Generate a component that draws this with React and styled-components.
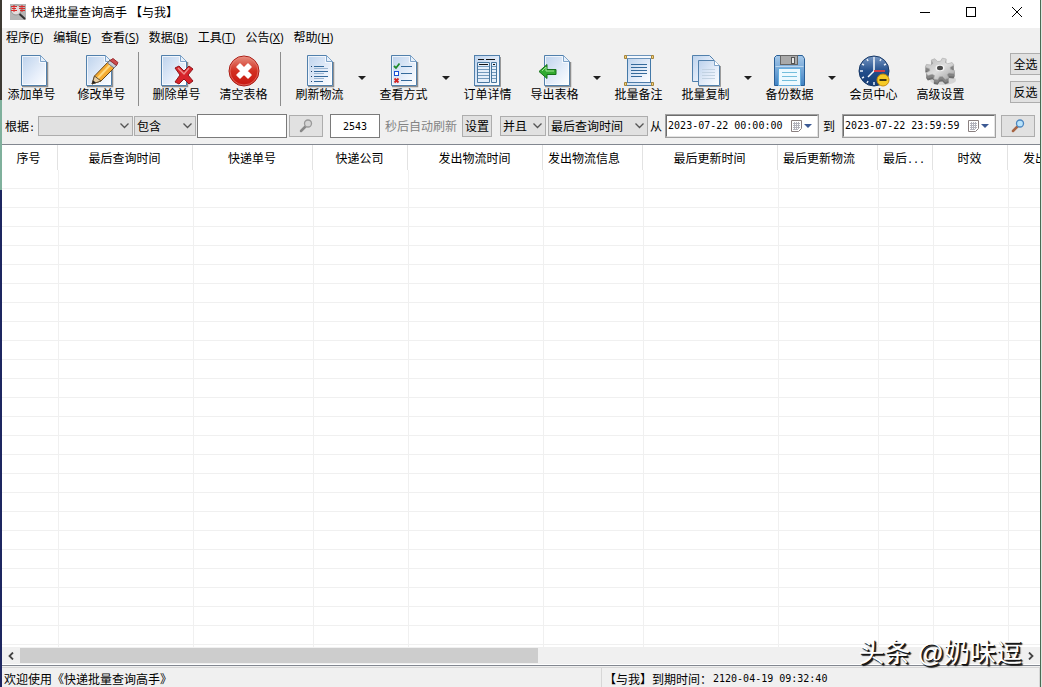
import { useState } from "react";
import styled, { createGlobalStyle } from "styled-components";

const mono = `"DejaVu Sans Mono", "Noto Sans CJK SC", monospace`;
const ui = `"Open Sans", "Noto Sans CJK SC", sans-serif`;

const GlobalStyle = createGlobalStyle`
* { box-sizing: border-box; }
body { margin: 0; overflow: hidden; background: #dfe6df; }
button, input, select { margin: 0; padding: 0; font: inherit; color: inherit; }
`;

const Window = styled.div`
display: flex;
flex-direction: column;
height: 100vh;
margin-right: 1px;
padding-left: 2px;
overflow: hidden;
position: relative;
background: linear-gradient(#3d3a33 0 100px, #7fb09c 100px 190px, #1d2660 190px) left top / 2px 100% no-repeat #f0f0f0;
border-right: 1px solid #4a6a54;
font: 12px/16px "Noto Sans CJK SC", sans-serif;
color: #000;
`;

const TitleBar = styled.header`
display: flex;
align-items: flex-start;
height: 28px;
flex: none;
background: #fff;
padding-left: 8px;
> svg {
margin-top: 4px;
}
`;
const Title = styled.h1`
flex: 1;
margin: 0;
padding: 1px 5px 0;
font: 12px/24px ${ui};
`;
const CaptionButton = styled.button`
display: flex;
justify-content: center;
align-items: center;
width: 46px;
height: 24px;
border: 0;
background: transparent;
`;

const MenuBar = styled.nav`
display: flex;
flex: none;
gap: 10px;
height: 20px;
padding-left: 4px;
font: 12px/20px ${ui};
`;
const MenuLink = styled.a`
color: #000;
text-decoration: none;
white-space: nowrap;
`;

const ToolBar = styled.div`
display: flex;
flex: none;
height: 62px;
padding-top: 4px;
overflow: hidden;
`;
const ToolButton = styled.button`
display: flex;
flex-direction: column;
align-items: center;
flex: none;
width: ${(props) => (props.$first ? 59 : 67)}px;
margin-right: ${(props) => (props.$first ? 7 : 0)}px;
padding-top: 2px;
border: 0;
background: transparent;
line-height: 16px;
svg {
flex: none;
margin-bottom: -2px;
}
`;
const DropButton = styled.button`
display: flex;
align-items: center;
justify-content: center;
flex: none;
width: 17px;
height: 52px;
border: 0;
background: transparent;
`;
const Divider = styled.span`
flex: none;
width: 1px;
height: 54px;
margin: 0 ${(props) => props.$gap}px 0 3px;
background: #8d8d8d;
`;
const SideButtons = styled.div`
display: flex;
flex-direction: column;
gap: 6px;
margin-left: auto;
padding-top: 1px;
`;
const SideButton = styled.button`
width: 30px;
height: 22px;
border: 1px solid #adadad;
border-right: 0;
background: #e1e1e1;
line-height: 20px;
`;

const FilterBar = styled.form`
display: flex;
align-items: center;
flex: none;
height: 34px;
padding: 0 5px 2px 3px;
white-space: nowrap;
`;
const Label = styled.label`
margin: 0 ${(props) => props.$right || 0}px 0 ${(props) => props.$left || 0}px;
color: ${(props) => (props.$muted ? "#838383" : "#000")};
`;
const SelectBox = styled.span`
display: flex;
align-items: center;
position: relative;
flex: none;
width: ${(props) => props.$width}px;
height: 20px;
margin-right: ${(props) => props.$gap}px;
svg {
position: absolute;
right: 4px;
pointer-events: none;
}
`;
const Select = styled.select`
appearance: none;
width: 100%;
height: 100%;
padding-left: 2px;
border: 1px solid #adadad;
border-radius: 0;
background: #e1e1e1;
`;
const TextInput = styled.input`
flex: none;
width: ${(props) => props.$width}px;
height: 24px;
margin-right: ${(props) => props.$gap}px;
border: 1px solid #7a7a7a;
background: #fff;
font: 10px/16px ${mono};
text-align: center;
`;
const PushButton = styled.button`
display: flex;
align-items: center;
justify-content: center;
flex: none;
width: ${(props) => props.$width}px;
height: 22px;
margin-right: ${(props) => props.$gap}px;
border: 1px solid #adadad;
background: #e1e1e1;
`;
const DateBox = styled.span`
display: flex;
align-items: center;
flex: none;
width: 154px;
height: 24px;
margin-right: ${(props) => props.$gap}px;
border: 2px solid;
border-color: #6d6d6d #e3e3e3 #e3e3e3 #6d6d6d;
outline: 1px solid #a0a0a0;
outline-offset: -1px;
background: #fff;
`;
const DateInput = styled.input`
flex: 1;
min-width: 0;
border: 0;
padding-left: 1px;
background: transparent;
font: 10px/16px ${mono};
`;
const DateButton = styled.button`
display: flex;
align-items: center;
gap: 2px;
margin-right: 5px;
border: 0;
background: transparent;
`;

const TableArea = styled.main`
flex: 1;
min-height: 0;
overflow: hidden;
border-top: 1px solid #828790;
background: #fff;
`;
const Table = styled.table`
table-layout: fixed;
width: 1106px;
border-collapse: separate;
border-spacing: 0;
`;
const HeadCell = styled.th`
height: 25px;
padding: 0 ${(props) => (props.$pad ? 0 : 4)}px 0 ${(props) => props.$pad || 0}px;
font-weight: 400;
text-align: ${(props) => (props.$pad ? "left" : "center")};
white-space: nowrap;
background: linear-gradient(#e2e2e2, #e2e2e2) right 1px top / 1px 100% no-repeat;
`;
const Cell = styled.td`
height: 19px;
padding: 0;
border-right: 1px solid #f0f0f0;
border-bottom: 1px solid #f0f0f0;
`;

const ScrollBar = styled.div`
display: flex;
flex: none;
height: 18px;
padding: 1px 0 2px;
background: linear-gradient(#fff, #fff) left bottom / 100% 1px no-repeat #f0f0f0;
`;
const ScrollButton = styled.button`
display: flex;
align-items: center;
justify-content: center;
width: 18px;
border: 0;
background: transparent;
`;
const Track = styled.div`
flex: 1;
`;
const Thumb = styled.div`
width: 51.7%;
height: 100%;
background: #cdcdcd;
`;

const StatusBar = styled.footer`
display: grid;
grid-template-columns: 600fr 438fr;
flex: none;
height: 22px;
border-top: 1px solid #828790;
`;
const StatusPanel = styled.div`
display: flex;
margin-top: 1px;
padding-left: 2px;
border-top: 1px solid #d7d7d7;
border-right: 1px solid #d7d7d7;
line-height: 21px;
white-space: nowrap;
overflow: hidden;
`;
const Mono = styled.span`
font-family: ${mono};
font-size: 10px;
line-height: 1;
`;
const StatusTime = styled.time`
padding-left: 1px;
font-family: ${mono};
font-size: 10px;
`;
const Watermark = styled.div`
position: absolute;
right: 18px;
bottom: 16px;
font: 26px/36px "Liberation Sans", "Noto Sans CJK SC", sans-serif;
color: #fff;
text-shadow: 1px 1px 0 #111, 2px 2px 1px #111;
pointer-events: none;
`;

const Icon = ({ children }) => (
  <svg width="34" height="34" viewBox="0 0 34 34" aria-hidden="true">
    <defs>
      <linearGradient id="paper" x1="0" y1="0" x2="1" y2="1">
        <stop offset="0" stopColor="#bcd2ec" />
        <stop offset="0.6" stopColor="#e6eefa" />
        <stop offset="1" stopColor="#ffffff" />
      </linearGradient>
      <linearGradient id="red" x1="0" y1="0" x2="0" y2="1">
        <stop offset="0" stopColor="#e58f80" />
        <stop offset="0.5" stopColor="#d32f20" />
        <stop offset="1" stopColor="#c8160f" />
      </linearGradient>
      <linearGradient id="steel" x1="0" y1="0" x2="1" y2="1">
        <stop offset="0" stopColor="#b8b8b8" />
        <stop offset="0.5" stopColor="#dedede" />
        <stop offset="1" stopColor="#a0a0a0" />
      </linearGradient>
      <linearGradient id="disk" x1="0" y1="0" x2="0" y2="1">
        <stop offset="0" stopColor="#a6c8e8" />
        <stop offset="1" stopColor="#3e82c4" />
      </linearGradient>
      <linearGradient id="night" x1="0" y1="0" x2="0" y2="1">
        <stop offset="0" stopColor="#7898c4" />
        <stop offset="0.5" stopColor="#234f8c" />
        <stop offset="1" stopColor="#143a74" />
      </linearGradient>
    </defs>
    {children}
  </svg>
);

const Paper = ({ x = 0 }) => (
  <g transform={`translate(${x} 0)`}>
    <path d="M5 32.5H30.500V8" fill="none" stroke="#777" strokeWidth="1.5" opacity="0.8" />
    <path d="M4.500 1.500H23.500L29.500 7.500V31.500H4.500Z" fill="url(#paper)" stroke="#5180ac" />
    <path d="M5.500 2.500H22.500V8.500H28.500V30.500H5.500Z" fill="none" stroke="#fff" strokeOpacity="0.7" />
    <path d="M23.500 1.500V7.500H29.500Z" fill="#e6f0fb" stroke="#7ea3c8" />
  </g>
);

const AddIcon = () => <Icon><Paper x={2} /></Icon>;
const EditIcon = () => (
  <Icon>
    <Paper x={-3} />
    <path d="M7 30L9.500 22L25 6L32 11L16 27Z" fill="#f5ab31" stroke="#6a4718" />
    <path d="M12 25L27 9" stroke="#ffd980" strokeWidth="2" />
    <path d="M7 30L9.500 22L16 27Z" fill="#e9cfa2" stroke="#5f4d35" />
    <path d="M7 30L8 26.500L11 28.500Z" fill="#222" />
    <path d="M22.500 9L25 6.500L31.500 11.500L29 14Z" fill="#c7ced5" stroke="#778" />
    <path d="M25 6.500L28 4.500L33 8.500L31.500 11.500Z" fill="#cd4a4d" stroke="#9d3033" />
  </Icon>
);
const DeleteIcon = () => (
  <Icon>
    <Paper x={-3} />
    <path d="M15 14L19 12L24 17L29 12L33 15L28 21L33 27L29 30L24 25L19 30L15 28L20 21Z" fill="#d8242b" stroke="#8f171d" />
    <path d="M18 14L24 20L29 14" fill="none" stroke="#ee8d8b" strokeWidth="1.5" />
  </Icon>
);
const ClearIcon = () => (
  <Icon>
    <circle cx="17" cy="17" r="15" fill="url(#red)" stroke="#a91c15" />
    <circle cx="17" cy="17" r="14" fill="none" stroke="#ee8c80" strokeOpacity="0.6" />
    <path d="M10 13L13 10L17 14L21 10L24 13L20 17L24 21L21 24L17 20L13 24L10 21L14 17Z" fill="#fff" stroke="#fff" strokeWidth="1.5" strokeLinejoin="round" />
  </Icon>
);
const RefreshIcon = () => (
  <Icon>
    <Paper />
    <path d="M11 12.500H21M11 17.500H25M11 22.500H25M11 27.500H20" stroke="#34699b" />
    <path d="M8 12.500H9M8 17.500H9M8 22.500H9M8 27.500H9" stroke="#1f4067" />
    <path d="M11 14.500H25M11 19.500H21M11 24.500H21" stroke="#9db7d2" />
  </Icon>
);
const ViewIcon = () => (
  <Icon>
    <Paper />
    <path d="M14 12.500H25M14 19.500H25M14 26.500H25" stroke="#34699b" />
    <path d="M7 12L9 14L12.500 9.500" fill="none" stroke="#1f8b2b" strokeWidth="1.8" />
    <rect x="7.5" y="17.5" width="4" height="4" fill="#fff" stroke="#1a4fd5" />
    <path d="M7.500 24.500L11.500 28.500M11.500 24.500L7.500 28.500" stroke="#d32222" strokeWidth="1.8" />
  </Icon>
);
const OrderIcon = () => (
  <Icon>
    <path d="M4 32.500H29.500V3" fill="none" stroke="#999" />
    <rect x="3.5" y="1.5" width="25" height="30" fill="url(#paper)" stroke="#5180ac" />
    <path d="M7 5.500H13M15 5.500H24" stroke="#111" />
    <path d="M6.500 8.500H18.500V28.500H6.500ZM20.500 8.500H25.500V28.500H20.500Z" fill="#e4eefa" stroke="#48779f" />
    <path d="M8 10.500H17M22 10.500H24" stroke="#111" />
    <path d="M7 12.500H18M7 15.500H18M7 18.500H18M7 21.500H18M7 24.500H18M21 12.500H25M21 15.500H25M21 18.500H25M21 21.500H25M21 24.500H25" stroke="#739abd" />
  </Icon>
);
const ExportIcon = () => (
  <Icon>
    <Paper x={2} />
    <path d="M1 17.500L9 10.500V15.500H18V20.500H9V24.500Z" fill="#32aa31" stroke="#15721b" />
    <path d="M4 17L8 13V17H16" fill="none" stroke="#9fe395" />
  </Icon>
);
const ScrollIcon = () => (
  <Icon>
    <path d="M5.500 3.500H28.500V29.500H5.500Z" fill="url(#paper)" stroke="#4479a8" />
    <path d="M9 10.500H25M9 13.500H25M9 16.500H25M9 19.500H25M9 22.500H20" stroke="#34699b" />
    <rect x="4.5" y="1.5" width="25" height="3" fill="#f4f8fd" stroke="#6b93ba" />
    <rect x="4.5" y="28.5" width="25" height="3" fill="#d5e4f4" stroke="#4d7ca9" />
    <path d="M2.500 1.500H4.500V4.500H2.500ZM29.500 1.500H31.500V4.500H29.500ZM2.500 28.500H4.500V31.500H2.500ZM29.500 28.500H31.500V31.500H29.500Z" fill="#f1d27a" stroke="#a8853a" strokeLinejoin="round" />
  </Icon>
);
const CopyIcon = () => (
  <Icon>
    <path d="M3.500 1.500H20.500L24.500 5.500V27.500H3.500Z" fill="url(#paper)" stroke="#5180ac" />
    <path d="M10 32.500H31.500V12" fill="none" stroke="#777" opacity="0.7" />
    <path d="M9.500 6.500H25.500L30.500 11.500V31.500H9.500Z" fill="url(#paper)" stroke="#5180ac" />
    <path d="M25.500 6.500V11.500H30.500" fill="#fff" stroke="#7ea3c8" />
    <path d="M13 15.500H26M13 18.500H26M13 21.500H26M13 24.500H26" stroke="#c2d2e2" />
  </Icon>
);
const SaveIcon = () => (
  <Icon>
    <path d="M3.500 1.500H29.500L31.500 4.500V31.500H1.500V3.500Z" fill="url(#disk)" stroke="#285f97" />
    <path d="M2.500 12.500H30.500" stroke="#b9d6ef" />
    <rect x="7.5" y="1.5" width="17" height="9" fill="#a9a9a9" stroke="#666" />
    <rect x="18.5" y="3.5" width="3" height="6" fill="#e8e8e8" stroke="#555" />
    <rect x="5.5" y="14.5" width="22" height="17" fill="#edf9ff" stroke="#67aede" />
    <path d="M9 18.500H24M9 22.500H24M9 26.500H24" stroke="#74bedc" />
  </Icon>
);
const ClockIcon = () => (
  <Icon>
    <circle cx="17" cy="17" r="15" fill="url(#night)" stroke="#173866" />
    <path d="M17 3V6M17 28V31M3 17H6M10 5L11 7M24 5L23 7M5 10L7 11M29 10L27 11M5 24L7 23M10 29L11 27" stroke="#e7eef7" strokeWidth="1.5" />
    <path d="M17 6V17L11 23" fill="none" stroke="#fff" strokeWidth="1.5" />
    <path d="M17 17H28" stroke="#e13b42" strokeWidth="1.8" />
    <circle cx="26" cy="26" r="6" fill="#f5ca25" stroke="#c88d09" />
    <path d="M22.500 26H29.500" stroke="#3f3510" strokeWidth="2" />
  </Icon>
);

// eight teeth on a tilted wheel, four corners to a tooth
const gearPoints = (dy) =>
  Array.from({ length: 32 }, (_, i) => {
    const step = i % 4;
    const angle = ((Math.floor(i / 4) + [0.05, 0.2, 0.55, 0.7][step]) * Math.PI) / 4;
    const r = step === 1 || step === 2 ? 1 : 0.7;
    return `${16 + 15 * r * Math.cos(angle)},${15 + dy + 11 * r * Math.sin(angle)}`;
  }).join(" ");

const GearIcon = () => (
  <Icon>
    <ellipse cx="19" cy="26" rx="13" ry="5" fill="#999" opacity="0.3" />
    {[5, 4, 3, 2, 1].map((dy) => (
      <polygon key={dy} points={gearPoints(dy)} fill={dy > 3 ? "#6f6f6f" : "#858585"} />
    ))}
    <polygon points={gearPoints(0)} fill="url(#steel)" stroke="#a9a9a9" strokeWidth="0.6" />
    <ellipse cx="16" cy="14" rx="4.5" ry="3.2" fill="#f4f4f4" />
    <ellipse cx="16" cy="14" rx="3" ry="2.2" fill="#4a4a4a" />
  </Icon>
);

const Triangle = ({ color = "#202020" }) => (
  <svg width="8" height="4" viewBox="0 0 8 4" aria-hidden="true"><path d="M0 0H8L4 4Z" fill={color} /></svg>
);
const Chevron = () => (
  <svg width="9" height="6" viewBox="0 0 9 6" aria-hidden="true"><path d="M0.500 0.500L4.500 4.500L8.500 0.500" fill="none" stroke="#555" strokeWidth="1.3" /></svg>
);
const Lens = ({ gray }) => (
  <svg width="14" height="14" viewBox="0 0 14 14" aria-hidden="true">
    <path d="M2 12L6.500 7.500" stroke={gray ? "#888" : "#a76543"} strokeWidth="2.5" strokeLinecap="round" />
    <circle cx="9" cy="4.5" r="3.5" fill={gray ? "#d5d5d5" : "#b9e3fb"} stroke={gray ? "#999" : "#4b86c0"} strokeWidth="1.3" />
  </svg>
);
const Calendar = () => (
  <svg width="11" height="12" viewBox="0 0 11 12" aria-hidden="true">
    <path d="M0.500 0.500H10.500V8.500L7.500 11.500H0.500Z" fill="#fff" stroke="#8a8080" />
    <path d="M2 3.500H9M2 5.500H9M2 7.500H9M2 9.500H7M3.500 2V10M5.500 2V10M7.500 2V9" stroke="#b2b2bb" />
  </svg>
);
const AppIcon = () => (
  <svg width="16" height="16" viewBox="0 0 16 16" aria-hidden="true">
    <rect width="16" height="16" fill="#b5b5b5" />
    <circle cx="6" cy="6" r="5" fill="#e4dcdc" stroke="#999" />
    <path d="M9.500 10L15 15" stroke="#333" strokeWidth="2" />
    <path d="M1 2.500H7M2 4.500H6M1 6.500H7M4 1V8M9 2.500H15M9 4.500H15M10 6.500H15M12 1V8" stroke="#d82c2c" />
  </svg>
);

const menus = [
  ["程序", "F"], ["编辑", "E"], ["查看", "S"], ["数据", "B"], ["工具", "T"], ["公告", "X"], ["帮助", "H"],
];

const tools = [
  { label: "添加单号", icon: AddIcon, first: true },
  { label: "修改单号", icon: EditIcon, divider: 4 },
  { label: "删除单号", icon: DeleteIcon },
  { label: "清空表格", icon: ClearIcon, divider: 5 },
  { label: "刷新物流", icon: RefreshIcon, drop: true },
  { label: "查看方式", icon: ViewIcon, drop: true },
  { label: "订单详情", icon: OrderIcon },
  { label: "导出表格", icon: ExportIcon, drop: true },
  { label: "批量备注", icon: ScrollIcon },
  { label: "批量复制", icon: CopyIcon, drop: true },
  { label: "备份数据", icon: SaveIcon, drop: true },
  { label: "会员中心", icon: ClockIcon },
  { label: "高级设置", icon: GearIcon },
];

const columns = [
  { title: "序号", width: 57 },
  { title: "最后查询时间", width: 135 },
  { title: "快递单号", width: 120 },
  { title: "快递公司", width: 95 },
  { title: "发出物流时间", width: 135 },
  { title: "发出物流信息", width: 100, pad: 4 },
  { title: "最后更新时间", width: 135 },
  { title: "最后更新物流", width: 100, pad: 4 },
  { title: "最后", width: 55, pad: 4, cut: true },
  { title: "时效", width: 75 },
  { title: "发出", width: 99, pad: 14 },
];

const rows = Array.from({ length: 60 }, (_, i) => i);

const Combo = ({ id, label, width, gap, options }) => (
  <SelectBox $width={width} $gap={gap}>
    <Select id={id} aria-label={label}>
      {options.map((o) => <option key={o}>{o}</option>)}
    </Select>
    <Chevron />
  </SelectBox>
);

const DateField = ({ id, gap, value, onChange }) => (
  <DateBox $gap={gap}>
    <DateInput id={id} value={value} onChange={(e) => onChange(e.target.value)} />
    <DateButton type="button" aria-label="选择日期">
      <Calendar />
      <Triangle color="#3c5a94" />
    </DateButton>
  </DateBox>
);

const App = () => {
  const [keyword, setKeyword] = useState("");
  const [seconds, setSeconds] = useState("2543");
  const [from, setFrom] = useState("2023-07-22 00:00:00");
  const [to, setTo] = useState("2023-07-22 23:59:59");

  return (
    <Window>
      <GlobalStyle />
      <TitleBar>
        <AppIcon />
        <Title>快递批量查询高手 【与我】</Title>
        <CaptionButton aria-label="最小化">
          <svg width="10" height="10"><path d="M0 5.500H10" stroke="#000" /></svg>
        </CaptionButton>
        <CaptionButton aria-label="最大化">
          <svg width="10" height="10"><rect x="0.5" y="0.5" width="9" height="9" fill="none" stroke="#000" /></svg>
        </CaptionButton>
        <CaptionButton aria-label="关闭">
          <svg width="10" height="10"><path d="M0 0L10 10M10 0L0 10" stroke="#000" /></svg>
        </CaptionButton>
      </TitleBar>

      <MenuBar>
        {menus.map(([name, key]) => (
          <MenuLink href="#" key={key}>{name}(<u>{key}</u>)</MenuLink>
        ))}
      </MenuBar>

      <ToolBar>
        {tools.map(({ label, icon: Pic, first, divider, drop }) => [
          <ToolButton key={label} $first={first}><Pic />{label}</ToolButton>,
          drop && <DropButton key={label + "drop"} aria-label={label}><Triangle /></DropButton>,
          divider && <Divider key={label + "line"} $gap={divider} />,
        ])}
        <SideButtons>
          <SideButton>全选</SideButton>
          <SideButton>反选</SideButton>
        </SideButtons>
      </ToolBar>

      <FilterBar onSubmit={(e) => e.preventDefault()}>
        <Label htmlFor="field" $right={3}>根据<Mono>:</Mono></Label>
        <Combo id="field" width={95} gap={1} options={[""]} />
        <Combo label="条件" width={62} gap={1} options={["包含"]} />
        <TextInput aria-label="关键字" $width={90} $gap={2} value={keyword} onChange={(e) => setKeyword(e.target.value)} />
        <PushButton $width={34} $gap={7} aria-label="搜索"><Lens gray /></PushButton>
        <TextInput id="seconds" $width={50} $gap={5} value={seconds} onChange={(e) => setSeconds(e.target.value)} />
        <Label htmlFor="seconds" $muted $right={5}>秒后自动刷新</Label>
        <PushButton type="button" $width={30} $gap={8}>设置</PushButton>
        <Combo label="逻辑" width={46} gap={2} options={["并且"]} />
        <Combo label="时间类型" width={100} gap={2} options={["最后查询时间"]} />
        <Label htmlFor="from" $right={3}>从</Label>
        <DateField id="from" gap={4} value={from} onChange={setFrom} />
        <Label htmlFor="to" $right={7}>到</Label>
        <DateField id="to" gap={5} value={to} onChange={setTo} />
        <PushButton $width={34} $gap={0} aria-label="按时间搜索"><Lens /></PushButton>
      </FilterBar>

      <TableArea>
        <Table>
          <colgroup>
            {columns.map((c, i) => <col key={i} style={{ width: c.width }} />)}
          </colgroup>
          <thead>
            <tr>
              {columns.map((c, i) => (
                <HeadCell key={i} $pad={c.pad}>{c.title}{c.cut && <Mono>...</Mono>}</HeadCell>
              ))}
            </tr>
          </thead>
          <tbody>
            {rows.map((r) => (
              <tr key={r}>{columns.map((c, i) => <Cell key={i} />)}</tr>
            ))}
          </tbody>
        </Table>
      </TableArea>

      <ScrollBar>
        <ScrollButton aria-label="向左">
          <svg width="6" height="8"><path d="M5 0.500L1.500 4L5 7.500" fill="none" stroke="#444" strokeWidth="1.8" /></svg>
        </ScrollButton>
        <Track><Thumb /></Track>
        <ScrollButton aria-label="向右">
          <svg width="6" height="8"><path d="M1 0.500L4.500 4L1 7.500" fill="none" stroke="#444" strokeWidth="1.8" /></svg>
        </ScrollButton>
      </ScrollBar>

      <StatusBar>
        <StatusPanel>欢迎使用《快递批量查询高手》</StatusPanel>
        <StatusPanel>【与我】到期时间：<StatusTime>2120-04-19 09:32:40</StatusTime></StatusPanel>
      </StatusBar>
      <Watermark>头条 @奶味逗</Watermark>
    </Window>
  );
};

export default App;
